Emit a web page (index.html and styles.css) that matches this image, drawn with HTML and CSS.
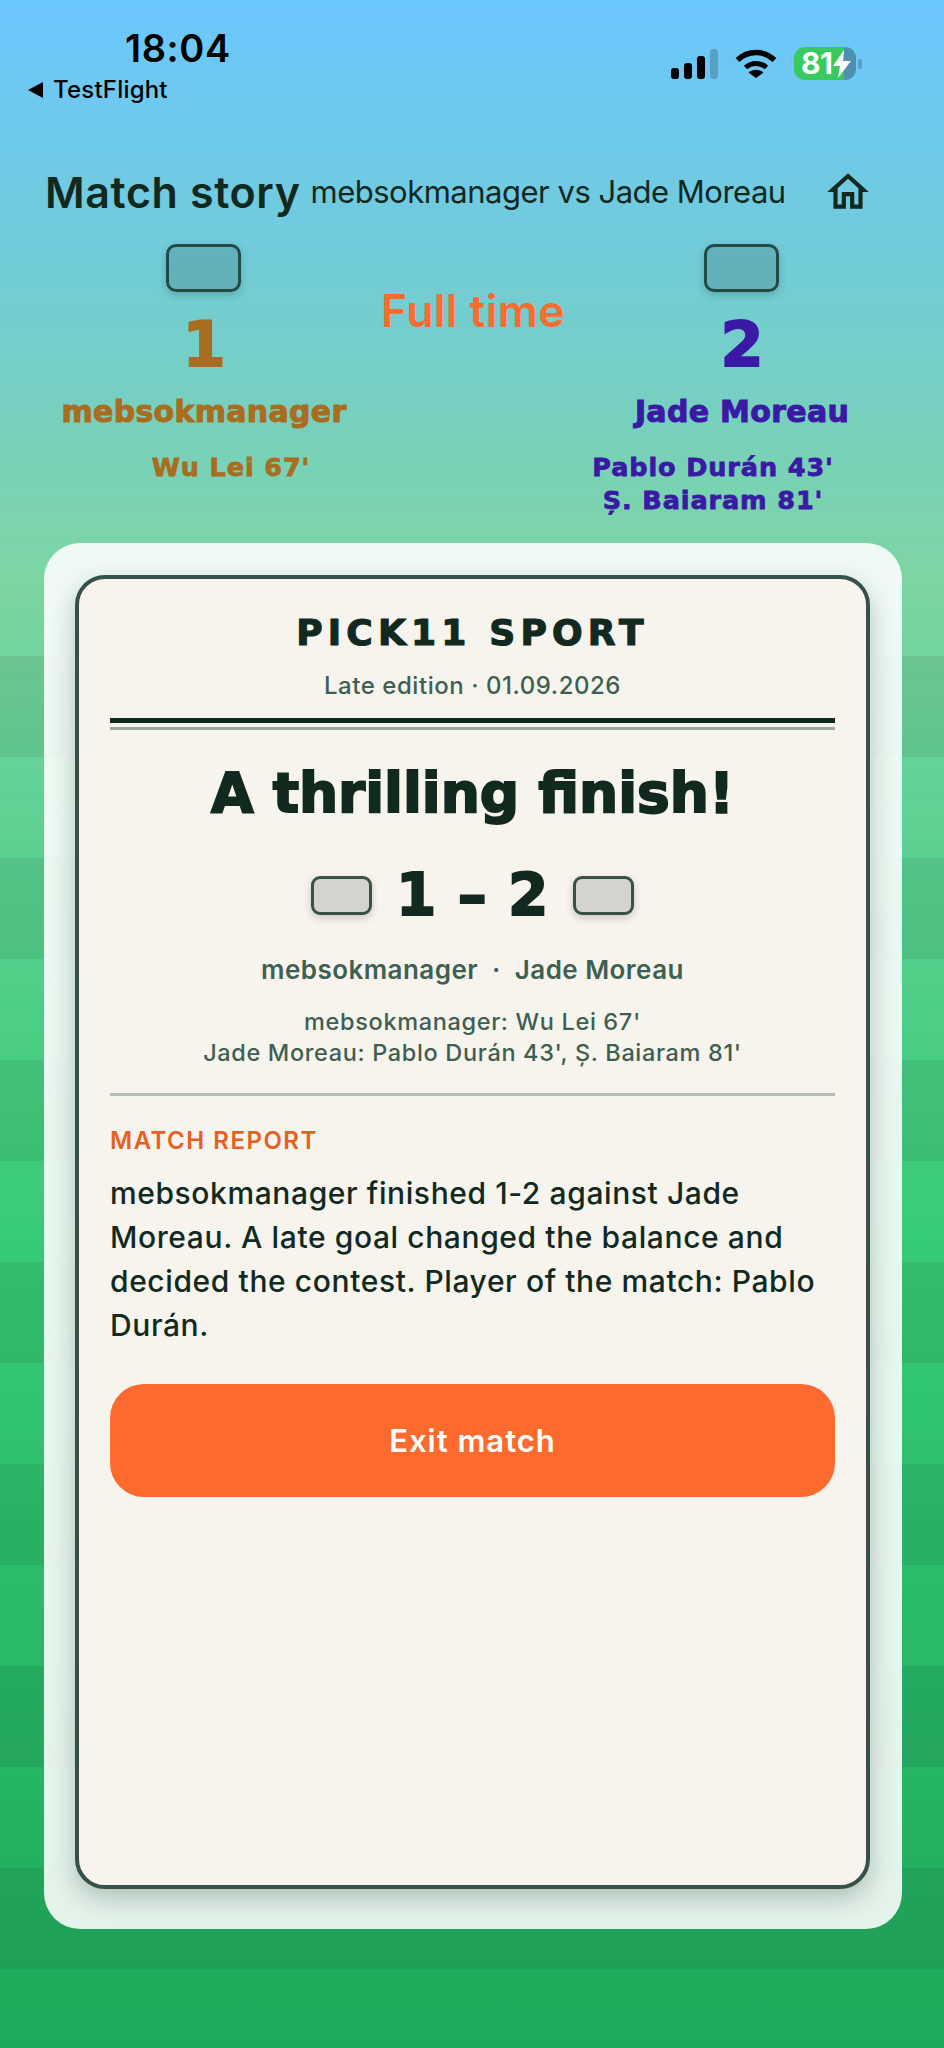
FILE: index.html
```html
<!DOCTYPE html>
<html lang="en">
<head>
    <meta charset="UTF-8">
    <meta name="viewport" content="width=device-width, initial-scale=1.0">
    <title>Match story</title>
    <link rel="stylesheet" href="styles.css">
</head>
<body>

    <!-- Status bar -->
    <div class="status-bar">
        <div class="status-left">
            <div class="status-time">18:04</div>
            <div class="status-back"><span class="back-arrow"></span>TestFlight</div>
        </div>
        <div class="status-right">
            <div class="signal">
                <span class="bar bar1"></span>
                <span class="bar bar2"></span>
                <span class="bar bar3"></span>
                <span class="bar bar4"></span>
            </div>
            <svg class="wifi" viewBox="0 0 42 30" width="42" height="30">
                <path d="M2.5 12C13 2 29 2 39.5 12" fill="none" stroke="#000" stroke-width="5.4"/>
                <path d="M10.5 19.5C16.5 14 25.5 14 31.500 19.500" fill="none" stroke="#000" stroke-width="5"/>
                <path d="M13.500 24.500C18 20.800 24 20.800 28.500 24.500L21 30Z" fill="#000"/>
            </svg>
            <div class="battery">
                <div class="battery-body">
                    <span class="battery-level">81</span>
                    <svg class="bolt" viewBox="0 0 18 28" width="18" height="28">
                        <path d="M11 0L0 16H7L5 28L18 11H10Z" fill="#fff"/>
                    </svg>
                </div>
                <span class="battery-nub"></span>
            </div>
        </div>
    </div>

    <!-- Header -->
    <header class="top-bar">
        <h1>Match story</h1>
        <span class="top-sub">mebsokmanager vs Jade Moreau</span>
        <svg class="home-icon" viewBox="0 0 24 24" width="50" height="50">
            <path d="M12 5.690l5 4.500V18h-2v-6H9v6H7v-7.810l5-4.500M12 3L2 12h3v8h6v-6h2v6h6v-8h3L12 3z" fill="#12291f"/>
        </svg>
    </header>

    <!-- Scoreboard -->
    <section class="scoreboard">
        <div class="team team-home">
            <div class="crest"></div>
            <div class="team-score">1</div>
            <div class="team-name">mebsokmanager</div>
        </div>
        <div class="match-state">Full time</div>
        <div class="team team-away">
            <div class="crest"></div>
            <div class="team-score">2</div>
            <div class="team-name">Jade Moreau</div>
        </div>
    </section>

    <section class="scorers">
        <div class="team-home">Wu Lei 67'</div>
        <div class="team-away">Pablo Durán 43'<br>Ș. Baiaram 81'</div>
    </section>

    <!-- Newspaper card -->
    <main class="shell">
        <article class="paper">
            <div class="paper-title">PICK11 SPORT</div>
            <div class="paper-edition">Late edition · 01.09.2026</div>
            <div class="paper-rule"></div>

            <h2 class="headline">A thrilling finish!</h2>

            <div class="result">
                <div class="crest crest-small"></div>
                <div class="result-score">1 – 2</div>
                <div class="crest crest-small"></div>
            </div>

            <div class="result-names">mebsokmanager &nbsp;·&nbsp; Jade Moreau</div>
            <div class="result-scorers">
                mebsokmanager: Wu Lei 67'<br>
                Jade Moreau: Pablo Durán 43', Ș. Baiaram 81'
            </div>

            <div class="thin-rule"></div>

            <div class="report-label">MATCH REPORT</div>
            <p class="report-text">mebsokmanager finished 1-2 against Jade Moreau. A late goal changed the balance and decided the contest. Player of the match: Pablo Durán.</p>

            <button class="exit-btn">Exit match</button>
        </article>
    </main>

</body>
</html>
```

FILE: styles.css
```css
/* General Styles */
* {
    margin: 0;
    padding: 0;
    box-sizing: border-box;
    font-family: Inter, "Noto Sans", sans-serif;
}
body {
    width: 944px;
    height: 2048px;
    overflow: hidden;
    color: #12291f;
    background:
        repeating-linear-gradient(180deg, rgba(0, 0, 0, 0.07) 0 101px, transparent 101px 202px) 0 656px / 100% 1392px no-repeat,
        linear-gradient(180deg, #6cc6ff 0%, #73cdd0 15%, #7cd5a3 28%, #5ed193 40%, #38cb77 60%, #2bbd6c 75%, #1fa95c 100%);
}

/* Status bar */
.status-bar {
    display: flex;
    justify-content: space-between;
    height: 104px;
    padding: 25px 82px 0 28px;
    color: #000;
}
.status-time {
    margin-left: 97px;
    font-size: 38px;
    line-height: 46px;
    font-weight: 600;
    letter-spacing: 0.6px;
}
.status-back {
    display: flex;
    align-items: center;
    margin-top: 5px;
    font-size: 24px;
    line-height: 28px;
    font-weight: 500;
    letter-spacing: 0.2px;
}
.back-arrow {
    width: 0;
    height: 0;
    margin-right: 10px;
    border-top: 8px solid transparent;
    border-bottom: 8px solid transparent;
    border-right: 15px solid #000;
}
.status-right {
    display: flex;
    align-items: flex-start;
    margin-top: 22px;
}
.signal {
    display: flex;
    align-items: flex-end;
    gap: 5px;
    height: 31px;
    margin-top: 1px;
}
.bar {
    display: block;
    width: 8px;
    border-radius: 3px;
    background-color: #000;
}
.bar1 { height: 11px; }
.bar2 { height: 16px; }
.bar3 { height: 23px; }
.bar4 { height: 30px; background-color: #5aa0c4; }
.wifi {
    margin: 1px 17px 0 17px;
}
.battery {
    display: flex;
    align-items: center;
}
.battery-body {
    display: flex;
    align-items: center;
    width: 62px;
    height: 33px;
    padding-left: 7px;
    border-radius: 11px;
    background: linear-gradient(90deg, #38c95f 0 50px, #4f8fb0 50px);
}
.battery-level {
    color: #fff;
    font-size: 30px;
    line-height: 33px;
    font-weight: 700;
    letter-spacing: -0.5px;
}
.bolt {
    margin-left: 1px;
}
.battery-nub {
    width: 4px;
    height: 10px;
    margin-left: 2px;
    border-radius: 0 3px 3px 0;
    background-color: #5a9fc4;
}

/* Header */
.top-bar {
    display: flex;
    align-items: center;
    height: 50px;
    margin-top: 63px;
    padding-left: 45px;
}
.top-bar h1 {
    font-size: 43px;
    line-height: 50px;
    font-weight: 600;
    letter-spacing: 0.6px;
}
.top-sub {
    margin-left: 10px;
    padding-bottom: 2px;
    font-size: 31px;
    font-weight: 400;
    letter-spacing: -0.5px;
}
.home-icon {
    margin-left: 37px;
}

/* Scoreboard */
.scoreboard {
    display: grid;
    grid-template-columns: 320px 218px 320px;
    margin-top: 27px;
    padding-left: 44px;
}
.team {
    display: flex;
    flex-direction: column;
    align-items: center;
}
.team-home {
    color: #a86d1e;
}
.team-away {
    color: #3a1aa5;
}
.crest {
    width: 75px;
    height: 48px;
    border: 3.5px solid #234a44;
    border-radius: 10px;
    background-color: rgba(10, 15, 15, 0.14);
    box-shadow: 0 3px 8px rgba(0, 0, 0, 0.18);
}
.team .crest {
    margin-right: 2px;
}
.team-score {
    margin-top: 15.5px;
    font-family: "DejaVu Sans", sans-serif;
    font-size: 62px;
    line-height: 74px;
    font-weight: 700;
    -webkit-text-stroke: 2px;
}
.team-name {
    margin-top: 13px;
    font-family: "DejaVu Sans", sans-serif;
    font-size: 30px;
    line-height: 34px;
    font-weight: 700;
    letter-spacing: 0.3px;
    -webkit-text-stroke: 1px;
}
.match-state {
    padding-top: 42px;
    color: #ff6b2e;
    font-size: 44.500px;
    line-height: 50px;
    font-weight: 600;
    letter-spacing: 0.4px;
    text-align: center;
}
.scorers {
    display: grid;
    grid-template-columns: 1fr 1fr;
    gap: 20px;
    margin-top: 22px;
    line-height: 33px;
    text-align: center;
}
.scorers div {
    font-family: "DejaVu Sans", sans-serif;
    font-size: 25.5px;
    font-weight: 700;
    letter-spacing: 0.9px;
    -webkit-text-stroke: 0.8px;
}

/* Newspaper card */
.shell {
    width: 858px;
    margin: 26px 0 0 44px;
    padding: 32px 32px 40px 31px;
    border-radius: 36px;
    background-color: rgba(255, 255, 255, 0.88);
}
.paper {
    height: 1314px;
    padding: 32px 31px 0 31px;
    border: 4px solid #37504a;
    border-radius: 30px;
    background-color: #f7f4ee;
    box-shadow: 0 10px 26px rgba(15, 40, 30, 0.25);
    text-align: center;
}
.paper-title {
    font-family: "DejaVu Sans", sans-serif;
    font-size: 36px;
    line-height: 44px;
    font-weight: 700;
    letter-spacing: 5.2px;
    -webkit-text-stroke: 1.2px;
}
.paper-edition {
    margin-top: 17.5px;
    color: #3f5f52;
    font-size: 24px;
    line-height: 28px;
    font-weight: 500;
    letter-spacing: 0.55px;
}
.paper-rule {
    height: 12px;
    margin-top: 18px;
    border-top: 5px solid #12291f;
    border-bottom: 3px solid #9aa8a0;
}
.headline {
    margin-top: 30px;
    font-family: "DejaVu Sans", sans-serif;
    font-size: 55px;
    line-height: 66px;
    font-weight: 700;
    -webkit-text-stroke: 2px;
}
.result {
    display: flex;
    justify-content: center;
    align-items: center;
    gap: 24px;
    margin-top: 36px;
}
.crest-small {
    width: 61px;
    height: 39px;
    border: 3px solid #3a5047;
    border-radius: 9px;
}
.result-score {
    font-family: "DejaVu Sans", sans-serif;
    font-size: 58px;
    line-height: 66px;
    font-weight: 700;
    letter-spacing: 0.6px;
    -webkit-text-stroke: 2px;
}
.result-names {
    margin-top: 27px;
    color: #3f5f52;
    font-size: 26px;
    line-height: 30px;
    font-weight: 600;
    letter-spacing: 0.45px;
}
.result-scorers {
    margin-top: 21px;
    color: #3f5f52;
    font-size: 23.500px;
    line-height: 31px;
    font-weight: 500;
    letter-spacing: 0.65px;
}
.thin-rule {
    height: 3px;
    margin-top: 25px;
    background-color: #b3bcb5;
}
.report-label {
    margin-top: 31px;
    color: #e85f23;
    font-size: 24px;
    line-height: 28px;
    font-weight: 600;
    letter-spacing: 1.5px;
    text-align: left;
}
.report-text {
    margin-top: 16px;
    font-size: 30px;
    line-height: 44px;
    font-weight: 500;
    letter-spacing: 0.6px;
    text-align: left;
}
.exit-btn {
    display: block;
    width: 100%;
    height: 113px;
    margin-top: 37px;
    border: none;
    border-radius: 34px;
    background-color: #ff6b2e;
    color: white;
    font-size: 31px;
    font-weight: 600;
    letter-spacing: 1px;
}
```
